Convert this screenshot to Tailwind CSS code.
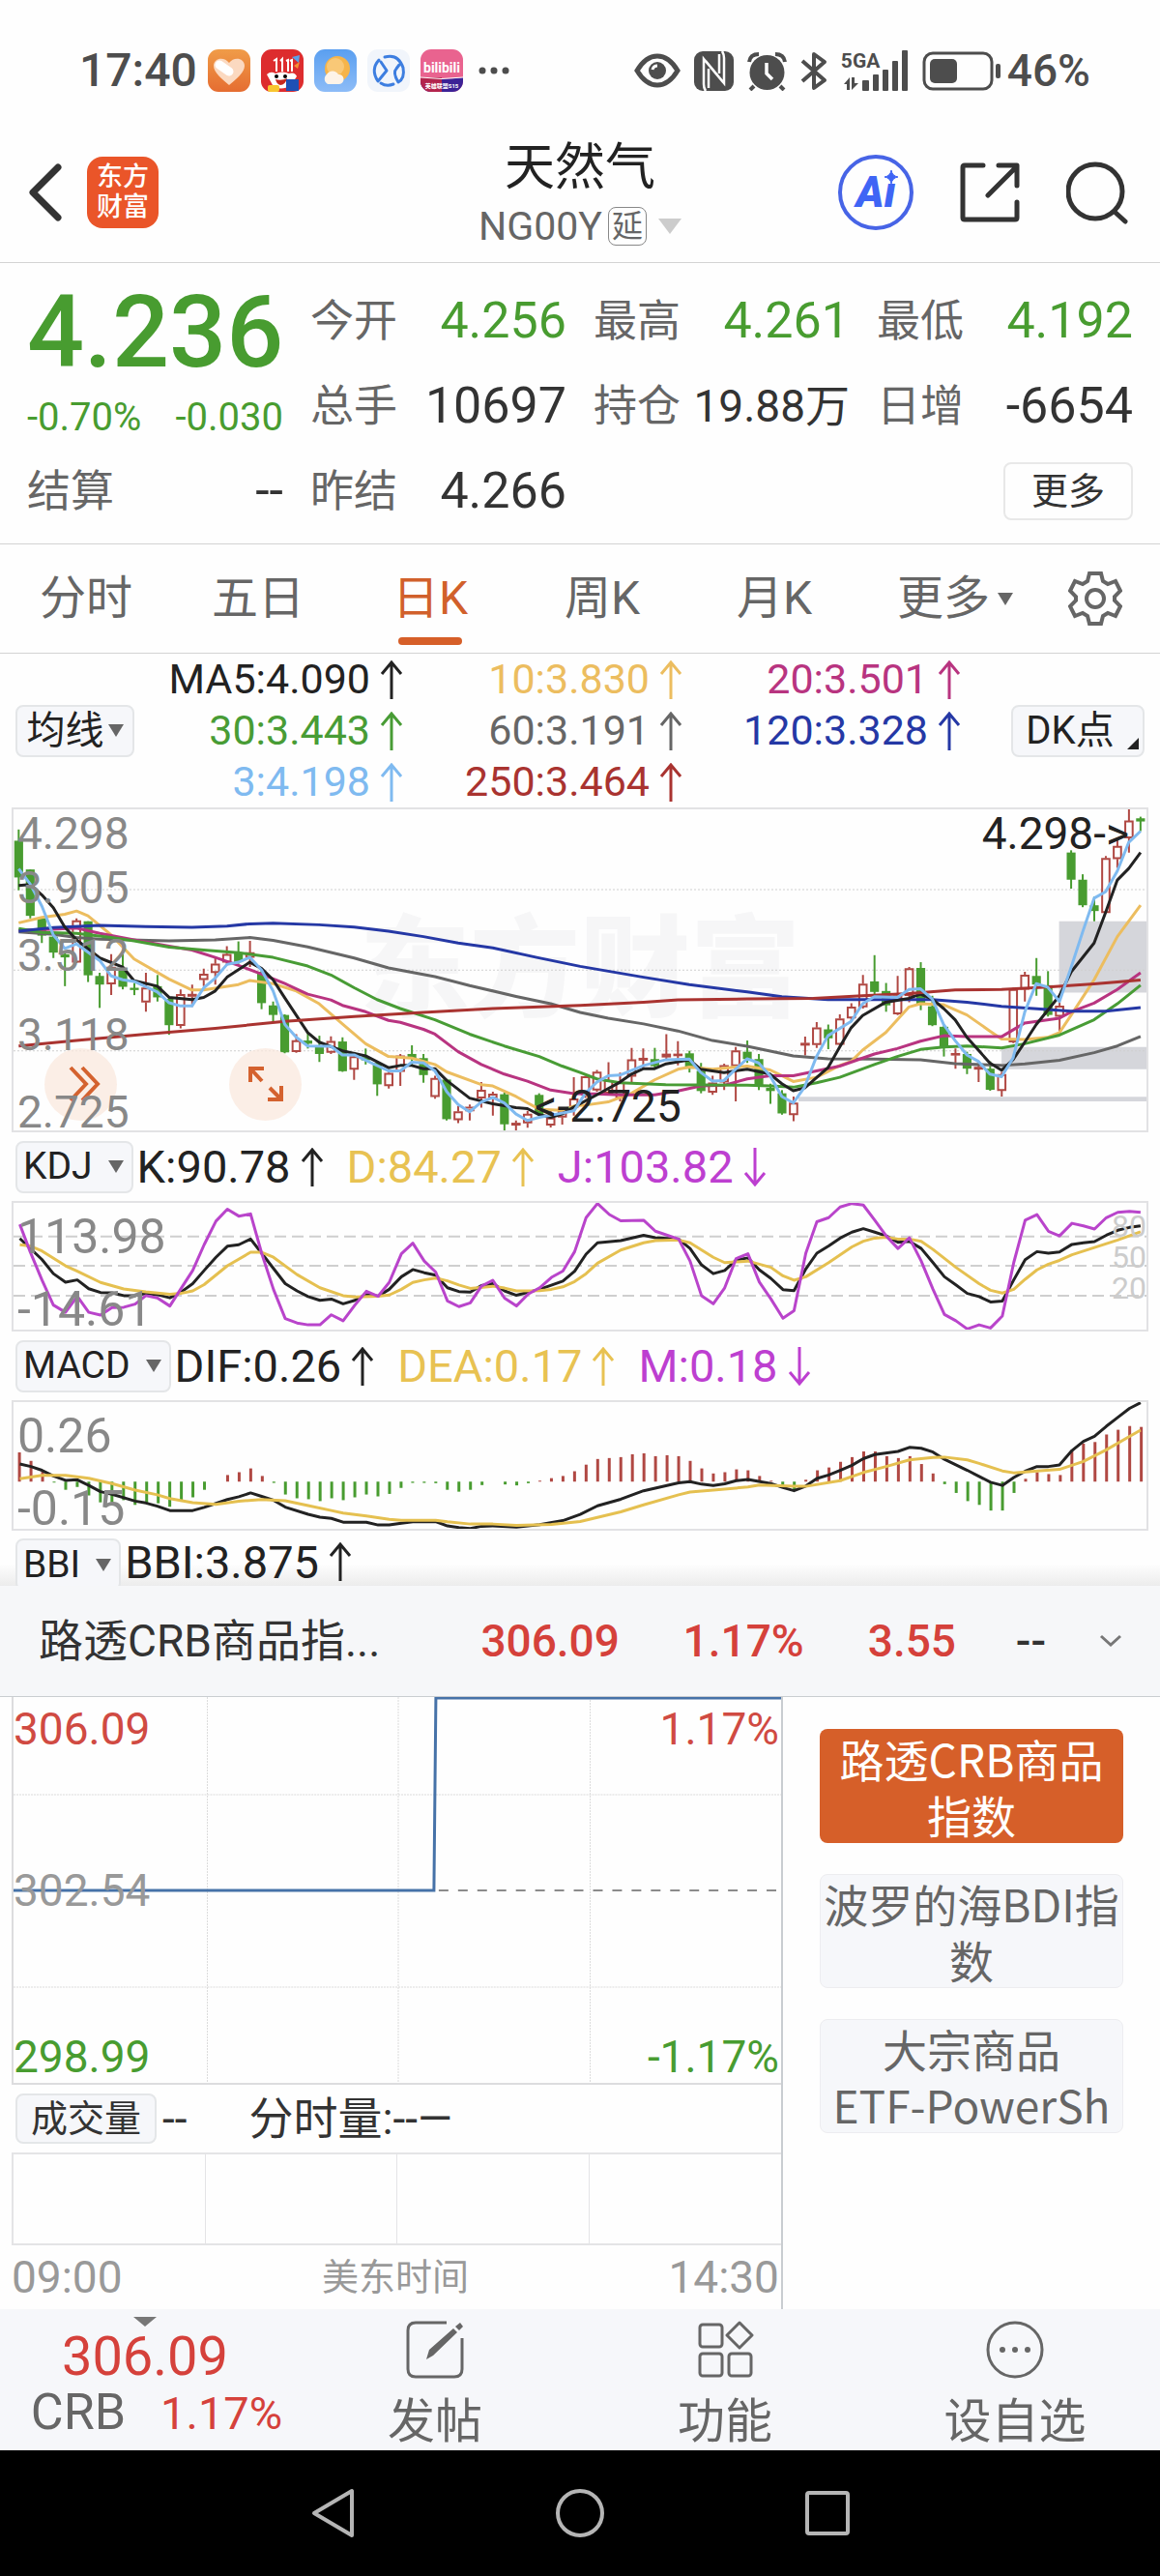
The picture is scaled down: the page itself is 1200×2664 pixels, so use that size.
<!DOCTYPE html>
<html lang="zh-CN">
<head>
  <meta charset="UTF-8" />
  <meta name="viewport" content="width=device-width, initial-scale=1" />
  <title>天然气 NG00Y</title>
  <script src="https://cdn.jsdelivr.net/npm/@tailwindcss/browser@4"></script>
</head>
<body class="bg-[#fefefe] text-[#333] font-['Roboto','Noto_Sans_CJK_SC',sans-serif] leading-none">
  <!-- shared shapes -->
  <svg class="hidden">
    <symbol id="up" viewBox="0 0 24 40"><path d="M12 40V2M2 14L12 2L22 14" fill="none" stroke="currentColor" stroke-width="3" /></symbol>
    <symbol id="down" viewBox="0 0 24 40"><path d="M12 0V38M2 26L12 38L22 26" fill="none" stroke="currentColor" stroke-width="3" /></symbol>
    <symbol id="tri" viewBox="0 0 16 13"><path d="M0 0H16L8 13Z" fill="currentColor" /></symbol>
  </svg>

  <!-- status bar -->
  <div class="flex items-center justify-between h-[146px] pl-[82px] pr-[72px] text-[#4d4d4d] text-5xl font-medium">
    <div class="flex items-center gap-[11px]">
      <span>17:40</span>
      <svg class="w-11 h-11" viewBox="0 0 44 44"><defs><linearGradient id="og" x2="0" y2="1"><stop stop-color="#f09c48" /><stop offset="1" stop-color="#e56d31" /></linearGradient></defs><rect width="44" height="44" rx="11" fill="url(#og)" /><path d="M22 37C14 30 6 24 6 17C6 9 17 7 22 14C27 7 38 9 38 17C38 24 30 30 22 37Z" fill="#fbd9c0" /><path d="M12 16L22 23" stroke="#fff" stroke-width="9" stroke-linecap="round" /></svg>
      <svg class="w-11 h-11" viewBox="0 0 44 44"><rect width="44" height="44" rx="11" fill="#dd2c2e" /><path d="M13 12L16 10V23M20 12L22 10V23M26 12L28 11V23M30 12L32 11V23" stroke="#fff" stroke-width="2" fill="none" /><path d="M6 26Q10 22 15 25Q22 22 29 25Q35 23 37 28L31 37Q20 44 12 37Z" fill="#fff" /><path d="M15 31Q21 33 27 30Q25 37 20 37Q16 36 15 31Z" fill="#c8281e" /><circle cx="16" cy="28" r="2" /><circle cx="25" cy="28" r="2" /><rect x="7" y="37" width="12" height="7" rx="2" fill="#f8c630" /><rect x="26" y="31" width="13" height="12" fill="#1f50b5" /><path d="M32 8L40 6L39 14Z" fill="#5aa1e8" /><path d="M34 17L40 13L38 20Z" fill="#f59037" /></svg>
      <svg class="w-11 h-11" viewBox="0 0 44 44"><defs><linearGradient id="sky" x2="0" y2="1"><stop stop-color="#5a9ff0" /><stop offset="1" stop-color="#8dbcf7" /></linearGradient></defs><rect width="44" height="44" rx="11" fill="url(#sky)" /><circle cx="24" cy="20" r="13" fill="#f6b44a" /><circle cx="22" cy="18" r="9" fill="#f9c877" /><path d="M14 36A6 6 0 0 1 13 26A7 7 0 0 1 25 26A5 5 0 0 1 26 36Z" fill="#fdf3e8" /></svg>
      <svg class="w-11 h-11" viewBox="0 0 44 44"><rect width="44" height="44" rx="11" fill="#f1f5fb" /><path d="M12 11Q3 21 11 33L20 22L14 13M18 8Q32 4 37 19Q39 30 32 34Q26 24 30 20L33 16M14 35Q20 39 27 36" fill="none" stroke="#3d7ee0" stroke-width="3" stroke-linecap="round" stroke-linejoin="round" /></svg>
      <svg class="w-11 h-11" viewBox="0 0 44 44"><rect width="44" height="44" rx="11" fill="#e9638f" /><path d="M0 29Q22 32 44 29V33A11 11 0 0 1 33 44H11A11 11 0 0 1 0 33Z" fill="#3c2296" /><path d="M0 29H22V44H11A11 11 0 0 1 0 33Z" fill="#b3244d" /><path d="M0 29Q22 32 44 29" stroke="#fff" fill="none" /><text x="22" y="24" text-anchor="middle" font-size="14" font-weight="700" fill="#fff">bilibili</text><text x="22" y="40" text-anchor="middle" font-size="6" font-weight="700" fill="#fff">英雄联盟S15</text></svg>
      <svg class="w-10 h-11" viewBox="0 0 40 44" fill="currentColor"><circle cx="9" cy="22" r="3.5" /><circle cx="21" cy="22" r="3.5" /><circle cx="33" cy="22" r="3.5" /></svg>
    </div>
    <div class="flex items-center gap-3.5">
      <svg class="w-12 h-9" viewBox="0 0 48 36" fill="none" stroke="currentColor"><path d="M3 18Q12 3 24 3T45 18Q36 33 24 33T3 18Z" stroke-width="5" /><circle cx="24" cy="18" r="9" fill="currentColor" stroke="none" /><path d="M19 17Q20 13 24 13" stroke="#fff" stroke-width="3" /></svg>
      <svg class="w-[41px] h-[41px]" viewBox="0 0 41 41"><rect width="41" height="41" rx="9" fill="currentColor" /><path d="M12 41Q10 38 10 34V8L30 32M29 0Q31 3 31 7V33L12 10M15 18V38M26 3V23" fill="none" stroke="#fefefe" stroke-width="2.5" /></svg>
      <svg class="w-[41px] h-[41px]" viewBox="0 0 41 41"><circle cx="20.5" cy="22" r="18" fill="currentColor" /><path d="M2 11Q3 3 12 3M39 11Q38 3 29 3M7 36L3 40M34 36L38 40" stroke="currentColor" stroke-width="4" fill="none" /><path d="M20 12V23L26 29" stroke="#fefefe" stroke-width="3.5" fill="none" /></svg>
      <svg class="w-7 h-[41px]" viewBox="0 0 28 41"><path d="M2 10L25 30L14 38V3L25 11L2 31" fill="none" stroke="currentColor" stroke-width="4" stroke-linejoin="round" /></svg>
      <div class="relative w-[70px] h-[42px]">
        <span class="absolute left-0 top-0 text-[21px] leading-[22px] font-bold">5GA</span>
        <svg class="w-full h-full" viewBox="0 0 70 42" fill="currentColor"><rect x="22" y="31" width="7" height="11" rx="1" /><rect x="33" y="25" width="6" height="17" rx="1" /><rect x="43" y="20" width="6" height="22" rx="1" /><rect x="53" y="11" width="6" height="31" rx="1" /><rect x="63" y="0" width="6" height="42" rx="1" /><path d="M3 35L9 28V41H6V35ZM11 28V41L18 34H14V28Z" /></svg>
      </div>
      <svg class="w-[82px] h-[41px]" viewBox="0 0 82 41"><rect x="2" y="2" width="70" height="37" rx="9" fill="none" stroke="currentColor" stroke-width="3" /><rect x="8" y="8" width="28" height="25" rx="5" fill="currentColor" /><rect x="76" y="13" width="5" height="15" rx="2" fill="currentColor" /></svg>
      <span class="-ml-2 text-[46px]">46%</span>
    </div>
  </div>

  <!-- title bar -->
  <header class="grid grid-cols-3 pb-[7px] border-b border-[#d3d3d3]">
    <div class="flex items-center gap-[26px] h-[106px] pl-[30px]">
      <button aria-label="返回"><svg class="w-[34px] h-[60px]" viewBox="0 0 34 60"><path d="M30 4L4 30L30 56" fill="none" stroke="#333" stroke-width="7" stroke-linecap="round" stroke-linejoin="round" /></svg></button>
      <a href="#" class="flex flex-col items-center justify-center w-[74px] h-[74px] rounded-2xl bg-[#ea5529] text-white text-[27px] leading-[31px] font-medium"><span>东方</span><span>财富</span></a>
    </div>
    <div class="flex flex-col items-center">
      <h1 class="text-[52px] leading-[56px] text-[#222]">天然气</h1>
      <button class="flex items-center h-[60px] mt-0.5 text-[41px] text-[#666]">
        <span>NG00Y</span>
        <span class="flex items-center justify-center w-10 h-10 ml-1.5 text-[32px] border border-[#888] rounded-lg">延</span>
        <svg class="w-6 h-4 ml-3 text-[#ccc]" viewBox="0 0 24 16"><path d="M0 0H24L12 16Z" fill="currentColor" /></svg>
      </button>
    </div>
    <div class="flex items-center justify-end gap-12 h-[106px] pr-8">
      <button aria-label="AI" class="relative flex items-center justify-center w-[78px] h-[78px] rounded-full border-4 border-[#4764e6] text-[44px] font-black italic text-[#3f65f5]">Aı<svg class="absolute right-3 top-3 w-3.5 h-3.5" viewBox="0 0 14 14"><path d="M7 0Q8 6 14 7Q8 8 7 14Q6 8 0 7Q6 6 7 0Z" fill="currentColor" stroke="currentColor" /></svg></button>
      <button aria-label="分享"><svg class="w-[62px] h-[62px]" viewBox="0 0 62 62" fill="none" stroke="#333" stroke-width="5" stroke-linecap="round" stroke-linejoin="round"><path d="M24 3H5Q3 3 3 5V57Q3 59 5 59H57Q59 59 59 57V41M40 3H59V24M58 5L29 34" /></svg></button>
      <button aria-label="搜索"><svg class="w-[65px] h-[65px]" viewBox="0 0 65 65" fill="none" stroke="#333" stroke-width="5" stroke-linecap="round"><circle cx="30" cy="31" r="28" /><path d="M50 52L61 62" /></svg></button>
    </div>
  </header>

  <!-- quote -->
  <section class="grid grid-cols-4 auto-rows-[88px] gap-x-7 px-7 pt-4 pb-2.5 border-b border-[#d3d3d3] text-[45px] text-[#666]">
    <div class="row-span-2 text-[#489c30]">
      <div class="text-[104px] leading-[112px] font-medium">4.236</div>
      <div class="flex items-center justify-between h-16 text-[40px]"><span>-0.70%</span><span>-0.030</span></div>
    </div>
    <div class="flex items-center justify-between">今开<span class="text-[52px] text-[#489c30]">4.256</span></div>
    <div class="flex items-center justify-between">最高<span class="text-[52px] text-[#489c30]">4.261</span></div>
    <div class="flex items-center justify-between">最低<span class="text-[52px] text-[#489c30]">4.192</span></div>
    <div class="flex items-center justify-between">总手<span class="text-[52px] text-[#333]">10697</span></div>
    <div class="flex items-center justify-between">持仓<span class="text-[46px] text-[#333]">19.88万</span></div>
    <div class="flex items-center justify-between">日增<span class="text-[52px] text-[#333]">-6654</span></div>
    <div class="flex items-center justify-between">结算<span class="text-[52px] text-[#333]">--</span></div>
    <div class="flex items-center justify-between">昨结<span class="text-[52px] text-[#333]">4.266</span></div>
    <div class="col-span-2 flex items-center justify-end">
      <button class="w-[134px] h-[60px] border-2 border-[#e8e8e8] rounded-lg text-[38px] text-[#333]">更多</button>
    </div>
  </section>

  <!-- period tabs -->
  <nav class="grid grid-cols-[repeat(5,178fr)_196fr_114fr] h-[113px] border-b border-[#d3d3d3] text-5xl text-[#666]">
    <button>分时</button>
    <button>五日</button>
    <button class="relative text-[#d1602b]">日K<span class="absolute left-1/2 bottom-2 w-[66px] h-2 -translate-x-1/2 rounded-full bg-[#d65f29]"></span></button>
    <button>周K</button>
    <button>月K</button>
    <button class="flex items-center justify-center gap-2">更多<svg class="w-4 h-[13px]"><use href="#tri" /></svg></button>
    <button aria-label="设置" class="flex items-center justify-center pr-5"><svg class="w-[56px] h-[58px]" viewBox="0 0 56 58" fill="none" stroke="#666" stroke-width="4"><path d="M22 3H34L36 11L41 14L49 11L54 21L48 27V31L54 37L49 47L41 44L36 47L34 55H22L20 47L15 44L7 47L2 37L8 31V27L2 21L7 11L15 14L20 11Z" /><circle cx="28" cy="29" r="9" /></svg></button>
  </nav>

  <!-- moving averages -->
  <section class="grid grid-cols-[123fr_278fr_289fr_288fr_190fr] items-center px-4 h-[159px] text-[43px]">
    <button class="flex items-center justify-center gap-1 h-[54px] border-2 border-[#e4e6e8] rounded-lg bg-[#f6f7fa] text-[40px] text-[#222]">均线<svg class="w-4 h-[13px] text-[#666]"><use href="#tri" /></svg></button>
    <div class="flex flex-col items-end">
      <span class="flex items-center gap-2.5 h-[53px] text-[#222]">MA5:4.090<svg class="w-6 h-10"><use href="#up" /></svg></span>
      <span class="flex items-center gap-2.5 h-[53px] text-[#489c35]">30:3.443<svg class="w-6 h-10"><use href="#up" /></svg></span>
      <span class="flex items-center gap-2.5 h-[53px] text-[#7fbaf0]">3:4.198<svg class="w-6 h-10"><use href="#up" /></svg></span>
    </div>
    <div class="flex flex-col items-end">
      <span class="flex items-center gap-2.5 h-[53px] text-[#ecbd5f]">10:3.830<svg class="w-6 h-10"><use href="#up" /></svg></span>
      <span class="flex items-center gap-2.5 h-[53px] text-[#666]">60:3.191<svg class="w-6 h-10"><use href="#up" /></svg></span>
      <span class="flex items-center gap-2.5 h-[53px] text-[#a93330]">250:3.464<svg class="w-6 h-10"><use href="#up" /></svg></span>
    </div>
    <div class="flex flex-col items-end">
      <span class="flex items-center gap-2.5 h-[53px] text-[#b83480]">20:3.501<svg class="w-6 h-10"><use href="#up" /></svg></span>
      <span class="flex items-center gap-2.5 h-[53px] text-[#2538a5]">120:3.328<svg class="w-6 h-10"><use href="#up" /></svg></span>
      <span class="h-[53px]"></span>
    </div>
    <button class="relative justify-self-end w-[138px] h-[54px] pr-4 border-2 border-[#e4e6e8] rounded-lg bg-[#f6f7fa] text-[40px] text-[#222]">DK点<svg class="absolute right-1 bottom-1.5 w-3 h-3" viewBox="0 0 12 12"><path d="M12 0V12H0Z" fill="#222" /></svg></button>
  </section>

  <!-- daily candles -->
  <section class="relative h-[336px] mx-3 border-2 border-[#e2e2e4] text-[46px] text-[#888]">
    <div class="absolute inset-0 flex items-center justify-center text-[114px] font-black text-[#f6f6f7]">东方财富</div>
    <svg id="kline" class="absolute inset-0 w-full h-full" viewBox="31 497 3073 1004" preserveAspectRatio="none" fill="none"></svg>
    <button aria-label="展开" class="absolute left-8 bottom-2.5 w-[75px] h-[75px] rounded-full bg-[#f9e8dd]/75"><svg class="w-full h-full" viewBox="0 0 75 75" fill="none" stroke="#d4622f" stroke-width="4"><path d="M27 20L43 37L27 54M39 20L55 37L39 54" /></svg></button>
    <button aria-label="全屏" class="absolute left-[223px] bottom-2.5 w-[75px] h-[75px] rounded-full bg-[#f9e8dd]/75"><svg class="w-full h-full" viewBox="0 0 75 75" fill="none" stroke="#d4622f" stroke-width="4"><path d="M36 21H22V35M22 21L34 34M42 41L54 53M54 39V53H40" /></svg></button>
    <span class="absolute left-1 top-0.5">4.298</span>
    <span class="absolute left-1 top-[58px]">3.905</span>
    <span class="absolute left-1 top-[128px]">3.512</span>
    <span class="absolute left-1 top-[210px]">3.118</span>
    <span class="absolute left-1 -bottom-1">2.725</span>
    <span class="absolute right-[18px] top-0.5 text-[#222]">4.298-&gt;</span>
    <span class="absolute left-[46%] bottom-0.5 text-[#222]">&lt;-2.725</span>
  </section>

  <!-- KDJ -->
  <div class="flex items-center h-[71px] px-4 text-[47px] text-[#222]">
    <button class="flex items-center gap-4 h-[54px] pl-1.5 pr-2 mr-1 border-2 border-[#e4e6e8] rounded-lg bg-[#f6f7fa] text-[39px]">KDJ<svg class="w-4 h-[13px] text-[#666]"><use href="#tri" /></svg></button>
    <span class="flex items-center gap-2.5">K:90.78<svg class="w-6 h-10"><use href="#up" /></svg></span>
    <span class="flex items-center gap-2.5 ml-6 text-[#e8c252]">D:84.27<svg class="w-6 h-10"><use href="#up" /></svg></span>
    <span class="flex items-center gap-2.5 ml-6 text-[#bd3fd0]">J:103.82<svg class="w-6 h-10"><use href="#down" /></svg></span>
  </div>
  <section class="relative h-[135px] mx-3 border-2 border-[#e2e2e4] text-[50px] text-[#888]">
    <svg id="kdj" class="absolute inset-0 w-full h-full" viewBox="31 215 3073 403" preserveAspectRatio="none" fill="none"></svg>
    <span class="absolute left-1 top-2.5">113.98</span>
    <span class="absolute left-1 -bottom-1">-14.61</span>
    <div class="absolute right-0 top-2 flex flex-col text-[32px] leading-8 text-[#ccc]"><span>80</span><span>50</span><span>20</span></div>
  </section>

  <!-- MACD -->
  <div class="flex items-center h-[71px] px-4 text-[47px] text-[#222]">
    <button class="flex items-center gap-4 h-[54px] pl-1.5 pr-2 mr-1 border-2 border-[#e4e6e8] rounded-lg bg-[#f6f7fa] text-[39px]">MACD<svg class="w-4 h-[13px] text-[#666]"><use href="#tri" /></svg></button>
    <span class="flex items-center gap-2.5">DIF:0.26<svg class="w-6 h-10"><use href="#up" /></svg></span>
    <span class="flex items-center gap-2.5 ml-6 text-[#e8c252]">DEA:0.17<svg class="w-6 h-10"><use href="#up" /></svg></span>
    <span class="flex items-center gap-2.5 ml-6 text-[#bd3fd0]">M:0.18<svg class="w-6 h-10"><use href="#down" /></svg></span>
  </div>
  <section class="relative h-[135px] mx-3 border-2 border-[#e2e2e4] text-[50px] text-[#888]">
    <svg id="macd" class="absolute inset-0 w-full h-full" viewBox="31 833 3073 403" preserveAspectRatio="none" fill="none"></svg>
    <span class="absolute left-1 top-2.5">0.26</span>
    <span class="absolute left-1 -bottom-1">-0.15</span>
  </section>

  <!-- BBI, cut off by the sheet below -->
  <div class="flex items-start h-[57px] pt-2 px-4 overflow-hidden text-[47px] text-[#222] bg-linear-to-b from-[#fefefe] from-60% to-[#ececec]">
    <button class="flex shrink-0 items-center gap-4 h-[54px] pl-1.5 pr-2 mr-1 border-2 border-[#e4e6e8] rounded-lg bg-[#f6f7fa] text-[39px]">BBI<svg class="w-4 h-[13px] text-[#666]"><use href="#tri" /></svg></button>
    <span class="flex items-center gap-2.5 h-12">BBI:3.875<svg class="w-6 h-10"><use href="#up" /></svg></span>
  </div>

  <!-- index sheet -->
  <div class="grid grid-cols-[457fr_209fr_191fr_153fr_86fr_63fr] items-center h-[115px] pl-10 border-b border-[#c9cdd1] bg-[#f6f7f9] text-[46px] text-[#d5413b] font-medium">
    <span class="text-[46px] font-normal text-[#333]">路透CRB商品指...</span>
    <span>306.09</span>
    <span>1.17%</span>
    <span>3.55</span>
    <span class="text-[#333]">--</span>
    <button aria-label="收起"><svg class="w-6 h-4" viewBox="0 0 24 16"><path d="M2 3L12 12L22 3" fill="none" stroke="#777" stroke-width="3" /></svg></button>
  </div>
  <div class="grid grid-cols-[810fr_390fr]">
    <div class="pl-3 border-r-2 border-[#c9cdd1]">
      <div class="relative h-[401px] border-l-2 border-b-2 border-[#dcdcde] text-[46px]">
        <svg class="absolute inset-0 w-full h-full" viewBox="12 1755 796 399" preserveAspectRatio="none" fill="none">
          <path d="M213 1755V2155M411 1755V2155M610 1755V2155M12 1856H808M12 2055H808" stroke="#dcdcdc" stroke-dasharray="2 1" />
          <path d="M453 1955H808" stroke="#8c8c8c" stroke-width="2" stroke-dasharray="10 10" />
          <path d="M12 1955H448L450 1756H808" stroke="#4672a8" stroke-width="3" />
        </svg>
        <span class="absolute left-0 top-2.5 text-[#d04a42]">306.09</span>
        <span class="absolute left-0 top-1/2 -translate-y-1/2 text-[#999]">302.54</span>
        <span class="absolute left-0 bottom-1 text-[#489c30]">298.99</span>
        <span class="absolute right-0.5 top-2.5 text-[#d04a42]">1.17%</span>
        <span class="absolute right-0.5 bottom-1 text-[#489c30]">-1.17%</span>
      </div>
      <div class="flex items-center h-[70px] pl-1 text-[46px]">
        <button class="w-[146px] h-[52px] mr-1.5 border-2 border-[#e4e6e8] rounded-lg bg-[#f6f7fa] text-[38px]">成交量</button>
        <span>--</span>
        <span class="ml-16">分时量:--—</span>
      </div>
      <div class="grid grid-cols-4 h-24 border-2 border-r-0 border-[#e4e4e6] divide-x divide-[#e4e4e6]"><div></div><div></div><div></div><div></div></div>
      <div class="flex items-center justify-between h-[66px] pr-0.5 text-[46px] text-[#999]"><span>09:00</span><span class="text-[38px]">美东时间</span><span>14:30</span></div>
    </div>
    <div class="flex flex-col gap-8 px-[38px] pt-[33px] font-['Noto_Sans_CJK_SC',sans-serif] text-[46px] leading-[58px] text-[#666]">
      <button class="h-[118px] rounded-lg bg-[#d65f29] text-white">路透CRB商品指数</button>
      <button class="h-[118px] border border-[#ededf0] rounded-lg bg-[#f6f7fa]">波罗的海BDI指数</button>
      <button class="h-[118px] border border-[#ededf0] rounded-lg bg-[#f6f7fa]">大宗商品<br />ETF-PowerSh</button>
    </div>
  </div>

  <!-- bottom bar -->
  <nav class="grid grid-cols-4 h-[146px] bg-[#f6f7fa] text-[49px] text-[#666]">
    <button class="flex flex-col items-center pt-2">
      <svg class="w-6 h-2.5 text-[#777]" viewBox="0 0 24 10"><path d="M0 0H24L12 10Z" fill="currentColor" /></svg>
      <span class="leading-[62px] text-[56px] text-[#d5413b]">306.09</span>
      <span class="flex items-center gap-9 h-[54px] pl-6 text-[52px]">CRB<span class="text-[47px] text-[#d5413b]">1.17%</span></span>
    </button>
    <button class="flex flex-col items-center pt-3">
      <svg class="w-15 h-15" viewBox="0 0 60 60" fill="none" stroke="currentColor" stroke-width="3"><path d="M42 2H10Q2 2 2 10V50Q2 58 10 58H50Q58 58 58 50V18" /><path d="M21 40L24 30L49 8L53 12L28 36ZM51 6L56 2L59 6L55 10Z" fill="currentColor" stroke="none" /></svg>
      <span class="mt-5">发帖</span>
    </button>
    <button class="flex flex-col items-center pt-3">
      <svg class="w-15 h-15" viewBox="0 0 60 60" fill="none" stroke="currentColor" stroke-width="3"><rect x="4" y="4" width="23" height="23" rx="3" /><rect x="4" y="34" width="23" height="23" rx="3" /><rect x="34" y="34" width="23" height="23" rx="3" /><path d="M45 2L58 15L45 28L32 15Z" stroke-linejoin="round" /></svg>
      <span class="mt-5">功能</span>
    </button>
    <button class="flex flex-col items-center pt-3">
      <svg class="w-15 h-15" viewBox="0 0 60 60" fill="currentColor"><circle cx="30" cy="30" r="28" fill="none" stroke="currentColor" stroke-width="3" /><circle cx="17" cy="30" r="3" /><circle cx="30" cy="30" r="3" /><circle cx="43" cy="30" r="3" /></svg>
      <span class="mt-5">设自选</span>
    </button>
  </nav>

  <!-- system navigation -->
  <div class="bg-black">
    <div class="grid grid-cols-3 h-[130px] mx-[18%]">
      <button aria-label="返回" class="flex items-center justify-center"><svg class="w-[46px] h-[52px]" viewBox="0 0 46 52"><path d="M43 3V49L4 26Z" fill="none" stroke="#b5b5b5" stroke-width="4" stroke-linejoin="round" /></svg></button>
      <button aria-label="主页" class="flex items-center justify-center"><svg class="w-[52px] h-[52px]" viewBox="0 0 52 52"><circle cx="26" cy="26" r="23" fill="none" stroke="#b5b5b5" stroke-width="4" /></svg></button>
      <button aria-label="最近任务" class="flex items-center justify-center"><svg class="w-[46px] h-[46px]" viewBox="0 0 46 46"><rect x="2" y="2" width="42" height="42" rx="2" fill="none" stroke="#b5b5b5" stroke-width="4" /></svg></button>
    </div>
  </div>

  <script>
    const RED = "#b04843";
    const GREEN = "#489c30";
    const STEP = 31.37;
    const xAt = (i) => 45 + i * STEP;

    // each candle: direction, high, body top, body bottom, low
    const candles = `g560,595,710,750 g685,685,830,838 g838,838,892,915 g885,895,945,962 g945,950,960,1050 r838,845,975,978 g847,847,1016,1037
      g1008,1018,1045,1118 r950,990,1043,1078 g950,1000,1052,1060 g1040,1055,1062,1078 r1008,1055,1100,1130 g1015,1050,1085,1098 g1085,1090,1172,1202
      r1060,1076,1173,1182 r1045,1075,1082,1115 r995,1012,1030,1050 r960,980,1008,1045 r925,950,975,985 g910,945,975,980 r908,945,960,990
      g1000,1005,1103,1122 g1098,1110,1140,1162 g1138,1140,1257,1260 r1200,1220,1255,1258 g1195,1220,1230,1245 g1205,1235,1262,1287 r1207,1222,1257,1262
      g1210,1223,1316,1318 r1262,1270,1310,1343 g1245,1272,1282,1295 g1285,1290,1357,1393 r1315,1322,1362,1370 r1262,1268,1317,1362 g1235,1262,1275,1300
      g1262,1275,1328,1352 r1330,1338,1396,1402 g1340,1342,1466,1470 r1425,1442,1468,1478 r1420,1428,1440,1470 r1350,1375,1400,1430 r1380,1387,1400,1455
      g1382,1388,1482,1503 r1470,1478,1485,1503 r1440,1450,1478,1493 g1385,1390,1450,1455 r1440,1462,1485,1492 r1430,1440,1460,1483 r1335,1402,1430,1455
      r1330,1333,1390,1400 r1312,1318,1375,1380 r1288,1345,1385,1390 r1320,1350,1400,1410 r1243,1280,1332,1350 r1245,1275,1282,1310 g1243,1278,1300,1308
      r1200,1262,1272,1280 r1222,1262,1268,1298 g1252,1260,1308,1320 g1290,1315,1378,1385 r1330,1352,1382,1390 r1292,1298,1350,1375 r1240,1252,1300,1410
      g1220,1255,1278,1290 g1262,1278,1365,1375 g1355,1368,1378,1418 g1375,1385,1448,1452 r1395,1415,1452,1472 r1208,1228,1235,1267 r1162,1180,1233,1243
      g1170,1185,1213,1247 r1138,1152,1232,1235 r1103,1115,1150,1160 r1015,1043,1115,1120 g953,1035,1068,1075 g1040,1065,1110,1130 r1018,1080,1137,1140
      r990,995,1080,1100 g975,993,1108,1125 g1080,1113,1172,1175 g1170,1177,1240,1270 r1245,1260,1266,1308 g1255,1262,1308,1325 r1298,1303,1310,1350
      g1285,1308,1374,1377 r1318,1326,1377,1395 r1055,1060,1225,1228 r1005,1015,1060,1098 g962,1018,1045,1080 g1003,1047,1140,1145 r1100,1112,1145,1190
      g625,632,717,745 g700,717,797,803 g770,797,815,847 r643,650,820,822 r590,612,652,680 r497,533,587,632 g520,525,535,565`.split(/\s+/);

    const averages = [
      ["#666666", "45,880 139,888 202,898 265,903 453,908 578,905 672,898 735,907 829,927 955,962 1048,993 1174,1020 1268,1048 1394,1082 1488,1105 1568,1132 1644,1150 1740,1168 1833,1190 1927,1220 2021,1238 2146,1268 2240,1277 2366,1278 2491,1280 2585,1292 2711,1298 2774,1293 2868,1282 2962,1258 3025,1237 3088,1207"],
      ["#ecbd5f", "45,852 108,835 170,825 202,815 233,830 296,890 358,965 453,1028 515,1062 547,1062 641,1045 672,1032 735,1042 798,1065 860,1105 923,1168 986,1230 1048,1270 1111,1275 1174,1295 1206,1318 1300,1358 1331,1362 1394,1395 1425,1415 1457,1435 1519,1438 1551,1425 1582,1422 1644,1412 1707,1385 1770,1343 1833,1310 1864,1303 1927,1310 2021,1300 2083,1312 2115,1330 2146,1348 2209,1335 2272,1298 2303,1285 2334,1250 2397,1195 2460,1115 2491,1105 2554,1108 2617,1140 2679,1190 2711,1215 2774,1217 2836,1210 2868,1195 2900,1140 2962,1030 3025,895 3088,797"],
      ["#b83480", "45,875 139,872 202,868 265,885 327,898 358,905 453,925 515,937 578,960 641,985 704,1012 767,1042 829,1075 892,1093 923,1110 986,1130 1048,1157 1080,1163 1143,1185 1174,1200 1237,1255 1300,1295 1362,1325 1425,1347 1488,1375 1551,1386 1613,1387 1676,1390 1770,1390 1833,1378 1895,1362 1958,1360 2021,1340 2083,1330 2146,1330 2209,1315 2272,1300 2366,1262 2428,1245 2491,1222 2554,1205 2617,1208 2711,1208 2774,1165 2868,1150 2900,1130 2962,1103 3025,1060 3088,1008"],
      ["#489c35", "45,870 108,882 202,885 296,898 358,908 453,928 547,937 641,945 735,960 829,987 892,1015 955,1055 1017,1092 1080,1120 1174,1155 1268,1200 1362,1237 1457,1270 1519,1300 1568,1320 1613,1340 1676,1352 1800,1358 2021,1360 2083,1362 2146,1366 2209,1352 2272,1335 2366,1295 2428,1270 2491,1248 2554,1240 2617,1237 2711,1243 2774,1230 2868,1203 2962,1155 3025,1105 3088,1047"],
      ["#2538a5", "45,878 139,867 265,860 390,864 515,866 610,862 672,855 735,853 860,858 955,865 1048,878 1143,895 1237,915 1331,930 1450,960 1568,988 1740,1022 1864,1045 2021,1068 2115,1083 2240,1092 2366,1092 2523,1092 2617,1100 2711,1113 2836,1123 2900,1128 2993,1128 3088,1117"],
      ["#222222", "45,735 76,732 108,765 139,805 170,865 202,905 265,962 327,990 358,1033 421,1050 453,1085 515,1092 547,1085 578,1065 610,1022 672,975 704,995 735,1030 767,1087 829,1195 860,1225 923,1252 986,1268 1048,1305 1080,1298 1111,1298 1143,1308 1174,1308 1206,1345 1268,1400 1331,1418 1394,1430 1425,1433 1457,1452 1488,1460 1519,1450 1551,1428 1613,1390 1676,1350 1707,1325 1740,1308 1770,1308 1801,1293 1864,1280 1895,1310 1958,1320 2021,1310 2083,1325 2115,1355 2146,1377 2177,1368 2240,1305 2272,1240 2303,1180 2334,1142 2397,1100 2460,1088 2491,1075 2523,1090 2554,1120 2585,1155 2617,1210 2679,1290 2711,1313 2742,1280 2774,1225 2805,1170 2868,1080 2900,1005 2962,915 2993,820 3025,718 3056,682 3088,632"],
      ["#a93330", "45,1237 202,1220 390,1200 578,1182 767,1160 955,1145 1143,1132 1331,1120 1568,1110 1740,1100 1833,1093 2021,1090 2200,1088 2334,1080 2460,1073 2585,1062 2711,1060 2836,1053 2962,1043 3088,1031"],
      ["#7fbaf0", "45,683 76,730 108,800 139,890 170,932 202,918 265,970 296,1018 327,1030 358,1035 421,1068 453,1102 484,1112 515,1112 547,1055 578,1025 610,982 641,975 672,960 704,1000 735,1065 767,1170 798,1210 829,1237 892,1238 923,1265 955,1265 1048,1315 1080,1315 1111,1288 1143,1290 1174,1315 1206,1380 1237,1420 1268,1443 1300,1412 1331,1398 1362,1415 1394,1450 1425,1470 1457,1460 1519,1447 1551,1440 1582,1385 1613,1350 1644,1330 1676,1328 1740,1298 1801,1280 1864,1278 1895,1320 1927,1347 1958,1345 1989,1310 2021,1277 2052,1290 2083,1330 2115,1395 2146,1415 2177,1365 2209,1270 2240,1205 2303,1160 2334,1105 2366,1083 2428,1085 2460,1060 2491,1058 2523,1090 2554,1170 2585,1220 2617,1265 2648,1285 2679,1325 2711,1333 2742,1275 2774,1130 2805,1042 2836,1053 2868,1098 2900,990 2931,880 2962,775 2993,755 3025,690 3056,600 3088,565"],
    ];

    const kdjLines = [
      ["#222222", "48,328 108,395 139,440 172,467 204,460 235,488 267,500 298,501 330,510 361,510 390,503 421,507 455,517 484,500 517,472 548,430 580,388 611,353 642,348 674,330 704,375 768,472 800,495 830,513 862,525 893,521 925,536 957,525 988,505 1020,512 1050,490 1083,450 1114,427 1145,437 1176,445 1208,485 1239,497 1270,499 1300,478 1331,472 1363,495 1395,509 1458,490 1521,464 1553,432 1584,378 1615,342 1678,335 1740,318 1772,326 1835,330 1866,360 1897,412 1929,440 1960,430 1991,397 2023,390 2054,428 2085,455 2118,491 2148,494 2180,425 2210,375 2242,352 2273,327 2305,308 2336,297 2367,308 2398,320 2430,340 2461,337 2493,360 2525,405 2556,450 2587,476 2618,503 2650,513 2681,530 2713,527 2744,460 2775,396 2807,370 2838,375 2868,371 2902,347 2933,342 2963,338 2995,318 3026,302 3058,293 3088,288"],
      ["#e5c050", "48,348 76,352 108,368 172,415 204,432 267,468 330,489 390,498 455,506 484,503 517,495 548,475 611,415 674,372 704,372 736,388 800,443 862,485 925,510 957,514 1020,512 1050,508 1083,490 1114,468 1145,460 1176,454 1208,463 1239,476 1270,487 1331,480 1363,486 1395,495 1458,494 1490,490 1521,482 1553,465 1584,440 1615,407 1678,365 1740,342 1772,335 1835,333 1866,342 1929,388 1960,405 2023,400 2085,420 2118,447 2148,461 2180,450 2242,405 2305,355 2336,337 2367,327 2398,324 2430,330 2461,330 2493,337 2525,363 2587,420 2650,472 2681,493 2713,502 2744,490 2775,458 2807,428 2838,410 2868,398 2902,380 2963,357 3026,333 3088,307"],
      ["#b944cb", "48,283 76,370 108,460 139,540 172,563 204,512 235,563 267,572 298,548 330,547 361,537 390,510 421,517 455,543 484,490 517,430 548,348 580,273 611,235 642,257 674,250 704,375 736,490 768,583 800,597 830,603 862,603 893,571 925,590 957,540 988,496 1020,512 1050,468 1083,377 1114,343 1145,400 1176,435 1208,527 1239,545 1270,533 1300,480 1331,461 1363,518 1395,543 1427,505 1458,485 1490,452 1521,432 1553,370 1584,262 1615,217 1647,252 1678,272 1740,270 1772,305 1835,330 1866,400 1897,510 1929,536 1960,485 1991,392 2023,377 2054,467 2085,520 2118,582 2148,558 2180,375 2210,275 2242,262 2273,228 2305,217 2336,222 2367,270 2398,320 2430,360 2461,326 2493,400 2525,490 2556,570 2587,590 2618,616 2650,603 2681,613 2713,575 2744,405 2775,270 2807,252 2838,305 2868,320 2902,280 2933,288 2963,298 2995,262 3026,245 3058,242 3088,245"],
    ];

    const macdZero = 1086;
    const macdBars = [993, 1020, 1055, 1089, 1112, 1103, 1130, 1152, 1152, 1145, 1160, 1155, 1155, 1166, 1150, 1136, 1112, 1086, 1065, 1056, 1044, 1068, 1090, 1127, 1139, 1142, 1148, 1139, 1145, 1136, 1127, 1133, 1125, 1106, 1090, 1090, 1091, 1112, 1118, 1112, 1097, 1086, 1095, 1098, 1091, 1083, 1075, 1068, 1053, 1032, 1014, 1011, 1008, 999, 996, 1005, 1002, 1005, 1020, 1044, 1060, 1056, 1047, 1050, 1068, 1083, 1106, 1112, 1080, 1050, 1041, 1023, 1008, 990, 990, 1005, 1011, 1005, 1030, 1060, 1094, 1122, 1148, 1160, 1178, 1178, 1122, 1077, 1056, 1062, 1065, 988, 965, 960, 936, 921, 909, 912];
    const macdLines = [
      ["#222222", "48,1030 78,1038 108,1050 139,1068 172,1082 204,1080 235,1098 267,1118 298,1126 361,1148 390,1154 421,1164 455,1178 517,1178 548,1168 611,1143 642,1134 674,1122 704,1133 736,1145 768,1167 830,1190 862,1199 893,1203 925,1215 988,1215 1020,1224 1050,1224 1083,1218 1114,1214 1176,1213 1208,1227 1239,1232 1270,1235 1300,1228 1331,1227 1395,1231 1458,1223 1521,1210 1568,1190 1615,1163 1678,1142 1740,1115 1835,1090 1866,1086 1897,1094 1929,1098 1960,1093 1991,1083 2023,1079 2085,1092 2118,1105 2148,1115 2180,1100 2210,1076 2242,1065 2273,1050 2305,1034 2336,1013 2367,1000 2430,990 2461,977 2493,980 2525,992 2556,1015 2618,1050 2681,1088 2713,1098 2744,1073 2775,1053 2807,1038 2838,1038 2868,1033 2902,987 2933,958 2963,942 2995,910 3026,882 3058,853 3088,835"],
      ["#e5c050", "48,1077 108,1066 172,1066 235,1075 298,1092 361,1113 421,1128 455,1140 517,1153 580,1158 642,1148 704,1143 768,1147 830,1162 893,1178 925,1186 988,1195 1050,1206 1083,1209 1176,1209 1208,1214 1270,1221 1331,1221 1395,1225 1490,1222 1568,1213 1678,1182 1740,1160 1835,1128 1866,1119 1929,1113 2023,1103 2054,1097 2148,1101 2180,1101 2273,1083 2336,1057 2398,1038 2461,1017 2525,1009 2556,1008 2618,1017 2650,1028 2713,1052 2744,1058 2807,1052 2868,1047 2933,1022 2995,985 3058,942 3088,922"],
    ];

    function line(d, color, width, extra = "") {
      return `<path d="${d}" stroke="${color}" stroke-width="${width}" vector-effect="non-scaling-stroke" ${extra}/>`;
    }

    function polylines(list) {
      return list.map(([color, pts]) => line("M" + pts.split(" ").join("L"), color, 3, 'stroke-linejoin="round"')).join("");
    }

    function drawKline() {
      let out = '<path d="M2867 847H3104V1070H2867ZM2711 1240H3104V1310H2711ZM2160 1396H3104V1410H2160Z" fill="#d5d6db"/>';
      out += line("M31 748H3104M31 1000H3104M31 1252H3104", "#cfcfcf", 1, 'stroke-dasharray="2 2"');
      candles.forEach((c, i) => {
        const x = xAt(i);
        const [high, top, bottom, low] = c.slice(1).split(",").map(Number);
        if (c[0] === "g") {
          out += line(`M${x} ${high}V${low}`, GREEN, 2);
          out += `<rect x="${x - 12}" y="${top}" width="24" height="${bottom - top}" fill="${GREEN}"/>`;
        } else {
          out += line(`M${x} ${high}V${top}M${x} ${bottom}V${low}`, RED, 2);
          out += line(`M${x - 10} ${top + 2}H${x + 10}V${bottom - 2}H${x - 10}Z`, RED, 2);
        }
      });
      document.getElementById("kline").innerHTML = out + polylines(averages);
    }

    function drawKdj() {
      const grid = line("M31 322H3104M31 415H3104M31 510H3104", "#cfcfcf", 2, 'stroke-dasharray="12 6"');
      document.getElementById("kdj").innerHTML = grid + polylines(kdjLines);
    }

    function drawMacd() {
      const bars = macdBars.map((y, i) => line(`M${xAt(i) + 2} ${macdZero}V${y}`, y < macdZero ? RED : GREEN, 3)).join("");
      document.getElementById("macd").innerHTML = bars + polylines(macdLines);
    }

    drawKline();
    drawKdj();
    drawMacd();
  </script>
</body>
</html>
